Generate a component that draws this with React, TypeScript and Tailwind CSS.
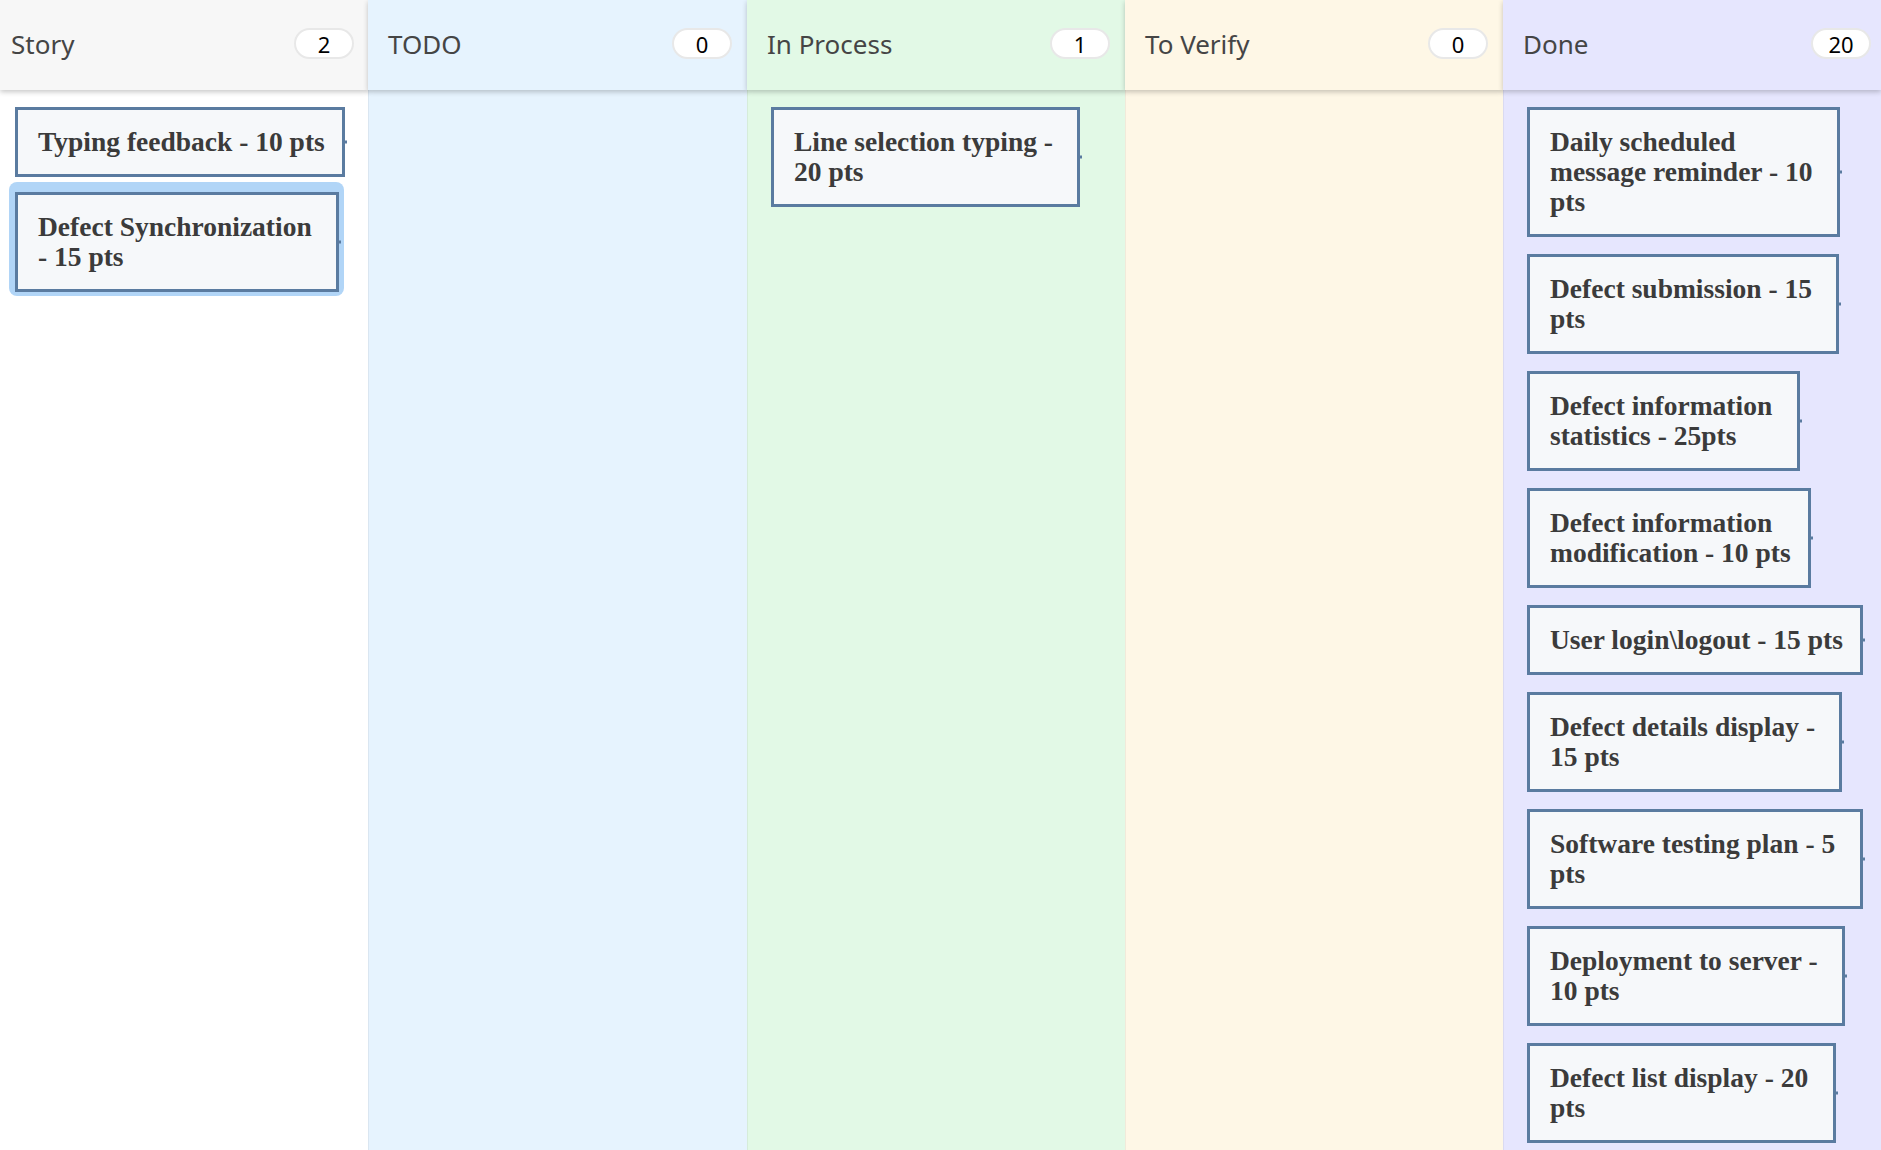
type Card = { title: string; width: string; selected?: boolean };

type Column = {
  name: string;
  count: number;
  width: string;
  headerBg: string;
  bodyBg: string;
  headerPad: string;
  bodyPad: string;
  cards: Card[];
};

const columns: Column[] = [
  {
    name: "Story",
    count: 2,
    width: "w-[368px]",
    headerBg: "bg-[#f7f7f7]",
    bodyBg: "bg-white",
    headerPad: "pl-[11px] pr-[14px]",
    bodyPad: "pl-[15px]",
    cards: [
      { title: "Typing feedback - 10 pts", width: "w-[330px]" },
      { title: "Defect Synchronization - 15 pts", width: "w-[324px]", selected: true },
    ],
  },
  {
    name: "TODO",
    count: 0,
    width: "w-[379px]",
    headerBg: "bg-[#e6f3fe]",
    bodyBg: "bg-[#e6f3fe]",
    headerPad: "pl-5 pr-[15px]",
    bodyPad: "pl-[23px]",
    cards: [],
  },
  {
    name: "In Process",
    count: 1,
    width: "w-[378px]",
    headerBg: "bg-[#e2f9e6]",
    bodyBg: "bg-[#e2f9e6]",
    headerPad: "pl-5 pr-[15px]",
    bodyPad: "pl-[23px]",
    cards: [{ title: "Line selection typing - 20 pts", width: "w-[309px]" }],
  },
  {
    name: "To Verify",
    count: 0,
    width: "w-[378px]",
    headerBg: "bg-[#fef7e6]",
    bodyBg: "bg-[#fef7e6]",
    headerPad: "pl-5 pr-[15px]",
    bodyPad: "pl-[23px]",
    cards: [],
  },
  {
    name: "Done",
    count: 20,
    width: "w-[378px]",
    headerBg: "bg-[#e6e6fe]",
    bodyBg: "bg-[#e6e6fe]",
    headerPad: "pl-5 pr-[10px]",
    bodyPad: "pl-[23px]",
    cards: [
      { title: "Daily scheduled message reminder - 10 pts", width: "w-[313px]" },
      { title: "Defect submission - 15 pts", width: "w-[312px]" },
      { title: "Defect information statistics - 25pts", width: "w-[273px]" },
      { title: "Defect information modification - 10 pts", width: "w-[284px]" },
      { title: "User login\\logout - 15 pts", width: "w-[336px]" },
      { title: "Defect details display - 15 pts", width: "w-[315px]" },
      { title: "Software testing plan - 5 pts", width: "w-[336px]" },
      { title: "Deployment to server - 10 pts", width: "w-[318px]" },
      { title: "Defect list display - 20 pts", width: "w-[309px]" },
    ],
  },
];

function StoryCard({ card }: { card: Card }) {
  const box = (
    <div
      className={`relative ${card.width} border-[3px] border-[#5a7ba0] bg-[#f6f8fa] py-[17px] pl-5 pr-3 font-['Liberation_Serif',serif] text-[27.5px] font-bold leading-[30px] text-[#3b3b3b]`}
    >
      {card.title}
      {/* little connector nub on the right edge */}
      <span className="absolute right-[-5px] top-1/2 h-[3px] w-[2px] -translate-y-1/2 bg-[#5a7ba0]" />
    </div>
  );
  if (card.selected) {
    return (
      <div className="-ml-[6px] -mt-[12px] w-fit rounded-[8px] bg-[#b1d5f7] pb-[4px] pl-[6px] pr-[5px] pt-[10px]">
        {box}
      </div>
    );
  }
  return box;
}

export default function App() {
  return (
    <div className="flex h-screen w-full overflow-hidden font-['Noto_Sans','Open_Sans',sans-serif]">
      {columns.map((col, i) => (
        <div key={col.name} className={`flex ${col.width} shrink-0 flex-col ${col.bodyBg}`}>
          <div
            className={`relative z-10 flex h-[90px] shrink-0 items-center justify-between ${col.headerBg} ${col.headerPad} shadow-[0_2px_5px_rgba(0,0,0,0.22)]`}
          >
            <span className="-mt-[2px] text-[26px] text-[#454545]">{col.name}</span>
            <span className="-mt-[3px] flex h-[31px] w-[60px] items-center justify-center rounded-full border-2 border-[#e8e8e8] bg-white text-[22px] leading-none text-black">
              {col.count}
            </span>
          </div>
          <div
            className={`flex flex-1 flex-col items-start gap-[17px] pt-[17px] ${col.bodyPad} ${
              i > 0 ? "border-l border-black/5" : ""
            }`}
          >
            {col.cards.map((card) => (
              <StoryCard key={card.title} card={card} />
            ))}
          </div>
        </div>
      ))}
    </div>
  );
}
